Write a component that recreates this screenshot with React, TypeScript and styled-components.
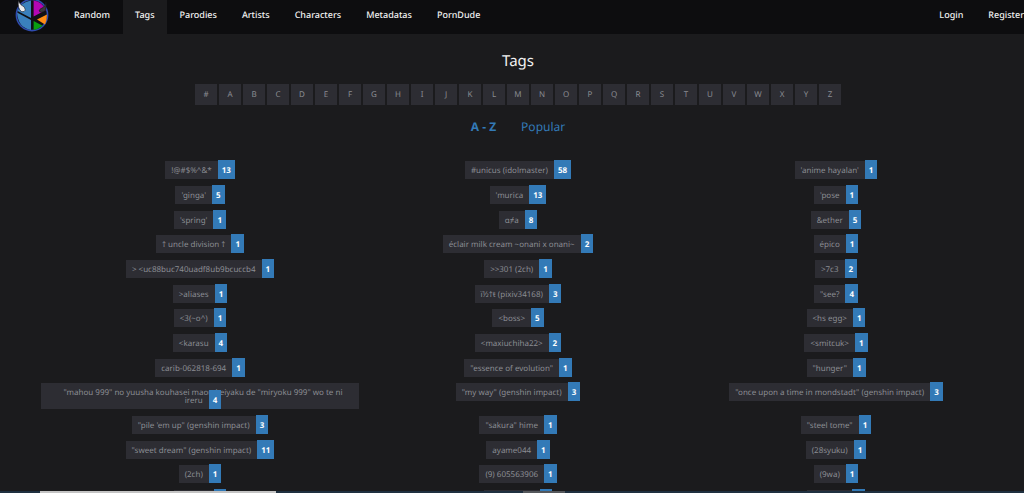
import React from 'react';
import styled, { createGlobalStyle } from 'styled-components';

const GlobalStyle = createGlobalStyle`
  * { box-sizing: border-box; }
  body {
    margin: 0;
    background: #1b1b1d;
    color: #f1f1f1;
    font-family: 'Noto Sans', 'DejaVu Sans', sans-serif;
    text-rendering: geometricPrecision;
  }
  a { text-decoration: none; color: inherit; }
`;

const Shell = styled.div`
  display: flex;
  flex-direction: column;
  height: 100vh;
  overflow: hidden;
`;

const Nav = styled.nav`
  display: flex;
  gap: 1px;
  flex: none;
  height: 34px;
  background: #0d0d0f;
  overflow: hidden;
`;

const LogoLink = styled.a`
  flex: none;
  height: 34px;
  padding: 0 12px 0 15px;
  svg { display: block; }
`;

const NavLink = styled.a<{ $active?: boolean }>`
  flex: none;
  padding: 0 12px;
  font-size: 9px;
  font-weight: 500;
  line-height: 30px;
  white-space: nowrap;
  background: ${(p) => (p.$active ? '#1b1b1d' : 'transparent')};
`;

const Account = styled.div`
  display: flex;
  gap: 1px;
  flex: none;
  margin-left: auto;
  margin-right: -12px;
`;

const Main = styled.main`
  flex: 1;
  min-height: 0;
  overflow: hidden;
  padding: 16px 29px 0 41px;
`;

const Title = styled.h1`
  margin: 0;
  font-size: 15px;
  font-weight: 400;
  line-height: 22px;
  text-align: center;
`;

const Letters = styled.div`
  display: flex;
  justify-content: center;
  gap: 2px;
  margin-top: 12px;
`;

const Letter = styled.a`
  width: 22px;
  background: #2d2d33;
  color: #8a8c92;
  font-size: 8px;
  line-height: 21px;
  text-align: center;
`;

const Sorts = styled.div`
  display: flex;
  justify-content: center;
  gap: 25px;
  margin-top: 12px;
  margin-bottom: 24px;
  font-size: 12px;
  line-height: 20px;
  color: #337ab7;
`;

const Sort = styled.a<{ $active?: boolean }>`
  font-weight: ${(p) => (p.$active ? 700 : 400)};
`;

const Row = styled.div`
  display: grid;
  grid-template-columns: repeat(3, 1fr);
  justify-items: center;
  align-items: start;
  padding-bottom: 7px;
  &:nth-child(3n) { padding-bottom: 6px; }
`;

const Tag = styled.a`
  padding: 6px 0 4px 6px;
  background: #2d2d33;
  color: #8a8c92;
  font-size: 8px;
  line-height: 8px;
  text-align: center;
`;

const Count = styled.span`
  margin-left: 6px;
  padding: 5px 4px 3px;
  background: #337ab7;
  color: #fff;
  font-weight: 700;
`;

const Stub = styled.span<{ $width: number }>`
  display: inline-block;
  width: ${(p) => p.$width}px;
`;

const BottomBar = styled.div`
  display: grid;
  flex: none;
  grid-template-columns: 40px 236px 247px 42px 1fr;
  height: 2px;
  background: #1f3040;
`;

const Segment = styled.span<{ $column: number; $color: string }>`
  grid-column: ${(p) => p.$column};
  background: ${(p) => p.$color};
`;

const Logo = () => (
  <svg width="34" height="34" viewBox="0 0 34 34" aria-hidden="true">
    <circle cx="17" cy="15" r="15.6" fill="#101014" stroke="#2f4bb0" strokeWidth="1.6" />
    <path d="M16 .6V18L2.6 11Q6 2 16 .6z" fill="#3a80bd" />
    <path d="M2 12.6L16 20V30Q3 28 2 12.6z" fill="#3a80bd" />
    <path d="M18.6 .6Q27 2 31 10L18.6 16.6z" fill="#b406b4" />
    <path d="M32 14.6Q32 20 30 24.6L22 19.6z" fill="#ff8c14" />
    <path d="M18.6 21L27.6 25.8Q23 29.4 18.6 30z" fill="#0aa010" />
    <path d="M3.4 .6Q2.4 9 6.6 11.6Q9.4 12.4 10.4 10Q9.6 6 6.8 5.4Q4.4 4 3.4 .6z" fill="#ececf0" stroke="#15151a" strokeWidth=".6" />
    <path d="M31 2Q32 9 29 11.6Q26 13.4 24 11Q24.6 8.6 28 7.6Q30.6 6 31 2z" fill="#3a3a3e" stroke="#15151a" strokeWidth=".6" />
  </svg>
);

type TagData = { name: string; count: number };
const t = (name: string, count: number): TagData => ({ name, count });

const rows: TagData[][] = [
  [t('!@#$%^&*', 13), t('#unicus (idolmaster)', 58), t("'anime hayalan'", 1)],
  [t("'ginga'", 5), t("'murica", 13), t("'pose", 1)],
  [t("'spring'", 1), t('α≠a', 8), t('&ether', 5)],
  [t('† uncle division †', 1), t('éclair milk cream ~onani x onani~', 2), t('épico', 1)],
  [t('> <uc88buc740uadf8ub9bcuccb4', 1), t('>>301 (2ch)', 1), t('>7c3', 2)],
  [t('>aliases', 1), t('ï½†ŧ (pixiv34168)', 3), t('"see?', 4)],
  [t('<3(~o^)', 1), t('<boss>', 5), t('<hs egg>', 1)],
  [t('<karasu', 4), t('<maxiuchiha22>', 2), t('<smitcuk>', 1)],
  [t('carib-062818-694', 1), t('"essence of evolution"', 1), t('"hunger"', 1)],
  [
    t('"mahou 999" no yuusha kouhasei maou keiyaku de "miryoku 999" wo te ni ireru', 4),
    t('"my way" (genshin impact)', 3),
    t('"once upon a time in mondstadt" (genshin impact)', 3),
  ],
  [t('"pile \'em up" (genshin impact)', 3), t('"sakura" hime', 1), t('"steel tome"', 1)],
  [t('"sweet dream" (genshin impact)', 11), t('ayame044', 1), t('(28syuku)', 1)],
  [t('(2ch)', 1), t('(9) 605563906', 1), t('(9wa)', 1)],
];

const stubWidths = [28, 44, 33];
const letters = '#ABCDEFGHIJKLMNOPQRSTUVWXYZ'.split('');
const links = ['Random', 'Tags', 'Parodies', 'Artists', 'Characters', 'Metadatas', 'PornDude'];

export default function App() {
  return (
    <Shell>
      <GlobalStyle />
      <Nav>
        <LogoLink href="#" aria-label="Home"><Logo /></LogoLink>
        {links.map((l) => (
          <NavLink key={l} href="#" $active={l === 'Tags'}>{l}</NavLink>
        ))}
        <Account>
          <NavLink href="#">Login</NavLink>
          <NavLink href="#">Register</NavLink>
        </Account>
      </Nav>
      <Main>
        <Title>Tags</Title>
        <Letters>
          {letters.map((l) => <Letter key={l} href="#">{l}</Letter>)}
        </Letters>
        <Sorts>
          <Sort href="#" $active>A - Z</Sort>
          <Sort href="#">Popular</Sort>
        </Sorts>
        <div>
          {rows.map((row, i) => (
            <Row key={i}>
              {row.map((tag) => (
                <Tag key={tag.name} href="#">
                  {tag.name}<Count>{tag.count}</Count>
                </Tag>
              ))}
            </Row>
          ))}
          <Row>
            {stubWidths.map((w) => (
              <Tag key={w} href="#"><Stub $width={w} /><Count>1</Count></Tag>
            ))}
          </Row>
        </div>
      </Main>
      <BottomBar>
        <Segment $column={2} $color="#c4c4c4" />
        <Segment $column={4} $color="#55585c" />
      </BottomBar>
    </Shell>
  );
}
